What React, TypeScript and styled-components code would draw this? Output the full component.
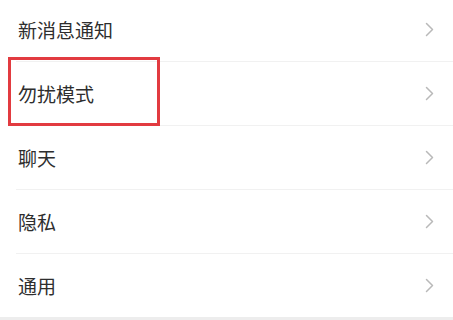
import React from "react";
import styled, { createGlobalStyle } from "styled-components";

const GlobalStyle = createGlobalStyle`
  html, body {
    margin: 0;
    padding: 0;
    background: #ededed;
  }
  body {
    font-family: "Noto Sans CJK SC", "Noto Sans", sans-serif;
  }
`;

const Page = styled.div`
  width: 453px;
  height: 320px;
  overflow: hidden;
  background: #ededed;
`;

const List = styled.ul`
  list-style: none;
  margin: -2px 0 0;
  padding: 0;
  background: #ffffff;
`;

// the red frame is an annotation drawn over the row
const Row = styled.li<{ $marked?: boolean }>`
  position: relative;
  height: 63px;
  display: flex;
  align-items: center;
  padding: 0 19px 0 18px;

  &::after {
    content: "";
    display: ${(p) => (p.$marked ? "block" : "none")};
    position: absolute;
    left: 8px;
    top: -5px;
    width: 146px;
    height: 63px;
    border: 3px solid #e23b40;
  }
`;

const Divider = styled.li`
  height: 1px;
  margin-left: 16px;
  background: #f1f1f1;
`;

const Label = styled.span`
  flex: 1;
  font-size: 19px;
  line-height: 1;
  color: #2e2e2e;
`;

const Chevron = () => (
  <svg width="9" height="15" viewBox="0 0 9 15" fill="none">
    <path
      d="M1.5 1.5L7.5 7.5L1.5 13.5"
      stroke="#b9b9b9"
      strokeWidth="1.5"
      strokeLinecap="round"
      strokeLinejoin="round"
    />
  </svg>
);

const items = ["新消息通知", "勿扰模式", "聊天", "隐私", "通用"];

export default function App() {
  return (
    <Page>
      <GlobalStyle />
      <List>
        {items.map((label, i) => (
          <React.Fragment key={label}>
            <Row $marked={label === "勿扰模式"}>
              <Label>{label}</Label>
              <Chevron />
            </Row>
            {i < items.length - 1 && <Divider />}
          </React.Fragment>
        ))}
      </List>
    </Page>
  );
}
